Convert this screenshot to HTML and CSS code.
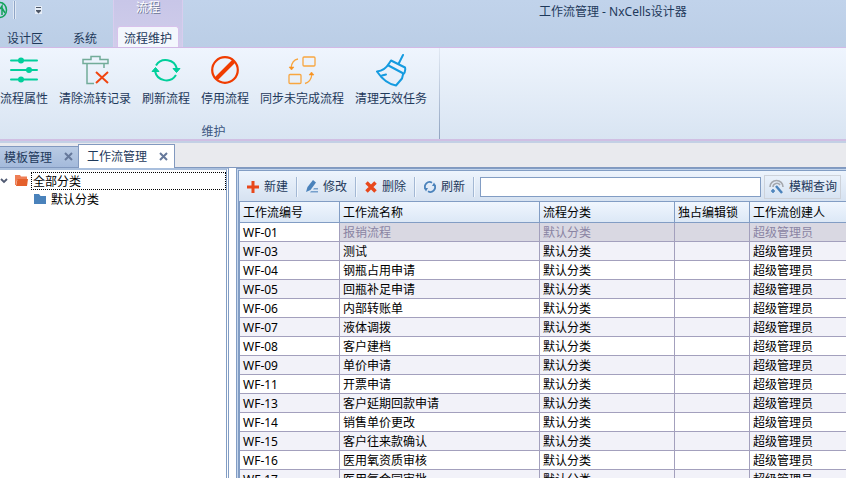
FILE: index.html
```html
<!DOCTYPE html>
<html lang="zh-CN">
<head>
    <meta charset="UTF-8">
    <meta name="viewport" content="width=device-width, initial-scale=1.0">
    <title>工作流管理 - NxCells设计器</title>
    <link rel="stylesheet" href="styles.css">
</head>
<body>
    <header class="titlebar">
        <div class="main-tabs">
            <div class="quick-bar">
                <svg class="logo" width="8" height="20" viewBox="0 0 8 20" fill="none" stroke="#12a35a" stroke-width="1.5">
                    <path d="M0 2.500a6.500 7.500 0 0 1 0 15"/>
                    <path d="M0 9l2-3v9M2 8l3 5"/>
                </svg>
                <span class="quick-sep"></span>
                <button class="quick-menu" aria-label="自定义快速访问工具栏">
                    <svg width="7" height="8" viewBox="0 0 7 8"><path d="M0 0h7v8H0z" fill="#e6edf7"/><path d="M1 1.500h5" stroke="#4c5666" stroke-width="1"/><path d="M1 4h5v1L3.500 7.500 1 5z" fill="#4c5666"/></svg>
                </button>
            </div>
            <nav class="tab-row">
                <button class="ribbon-tab">设计区</button>
                <button class="ribbon-tab">系统</button>
            </nav>
        </div>
        <div class="context-group">
            <div class="context-title">流程</div>
            <button class="ribbon-tab active">流程维护</button>
        </div>
        <h1 class="window-title">工作流管理 - NxCells设计器</h1>
    </header>

    <section class="ribbon">
        <div class="ribbon-group">
            <div class="ribbon-buttons">
                <button class="ribbon-btn">
                    <svg width="30" height="30" viewBox="0 0 30 30" stroke="#00cf9b" stroke-width="2" stroke-linecap="round" fill="#00cf9b">
                        <path d="M2 5.500h26M2 15h26M2 24.500h26"/>
                        <circle cx="12" cy="5.500" r="2"/><circle cx="20" cy="15" r="2"/><circle cx="12" cy="24.500" r="2"/>
                    </svg>
                    <span>流程属性</span>
                </button>
                <button class="ribbon-btn">
                    <svg width="30" height="30" viewBox="0 0 30 30" fill="none" stroke="#72ac99" stroke-width="1.5">
                        <path d="M3 4.500h8v-3h9v3h8v4H3zM7 8.500v20h7M24 8.500v4.500"/>
                        <path d="M16 17l12 11M28 17L16 28" stroke="#f04410" stroke-width="2"/>
                    </svg>
                    <span>清除流转记录</span>
                </button>
                <button class="ribbon-btn">
                    <svg width="30" height="30" viewBox="0 0 30 30" fill="none" stroke="#00cf9b" stroke-width="2">
                        <path d="M5 10.500A11.500 11.500 0 0 1 26 14M25 20A11.500 11.500 0 0 1 4 16"/>
                        <path d="M22 13.500h7l-3.500 4zM1 16.500h7l-3.500-4z" fill="#00cf9b" stroke-width="1"/>
                    </svg>
                    <span>刷新流程</span>
                </button>
                <button class="ribbon-btn">
                    <svg width="30" height="30" viewBox="0 0 30 30" fill="none" stroke="#f03c00">
                        <circle cx="15" cy="15" r="12.800" stroke-width="2.200"/>
                        <path d="M6 24L24 6" stroke-width="4"/>
                    </svg>
                    <span>停用流程</span>
                </button>
                <button class="ribbon-btn">
                    <svg width="30" height="30" viewBox="0 0 30 30" fill="none" stroke="#f8a640" stroke-width="1.300">
                        <rect x="16" y="2" width="12" height="9" rx="1"/>
                        <rect x="2" y="19.500" width="12" height="9" rx="1"/>
                        <path d="M11 4Q5 5 4 13M18 28.500Q24 27 25 19"/>
                        <path d="M2 12h5l-2.500 3zM22 20h5l-2.500-3z" fill="#f8931f" stroke="#f8931f" stroke-width=".5"/>
                    </svg>
                    <span>同步未完成流程</span>
                </button>
                <button class="ribbon-btn">
                    <svg width="32" height="34" viewBox="0 0 32 34" fill="none" stroke="#159be0" stroke-width="2" stroke-linejoin="round" stroke-linecap="round">
                        <path d="M28 2l-4 8M16 7.500l14 7q1 4-2 7l-1 4-6 7q-11-2-19-14 8-1 12-8z"/>
                        <path d="M13.500 12.500l14 7.500M7 22.500l4-1"/>
                    </svg>
                    <span>清理无效任务</span>
                </button>
            </div>
            <div class="group-caption">维护</div>
        </div>
    </section>

    <nav class="doc-tabs">
        <div class="doc-tab">
            <button class="doc-name">模板管理</button>
            <button class="doc-close" aria-label="关闭"><svg width="9" height="9" viewBox="0 0 9 9"><path d="M1 1l7 7M8 1L1 8" stroke="#66799b" stroke-width="2"/></svg></button>
        </div>
        <div class="doc-tab current">
            <button class="doc-name">工作流管理</button>
            <button class="doc-close" aria-label="关闭"><svg width="9" height="9" viewBox="0 0 9 9"><path d="M1 1l7 7M8 1L1 8" stroke="#66799b" stroke-width="2"/></svg></button>
        </div>
    </nav>

    <main class="workspace">
        <aside class="tree-pane">
            <div class="tree-row">
                <svg width="8" height="6" viewBox="0 0 8 6" fill="none" stroke="#505a72" stroke-width="1.800"><path d="M1 1l3 3 3-3"/></svg>
                <svg class="folder" width="13" height="12" viewBox="0 0 13 12"><path d="M0 0h5l1 1.500h6V5H2L1 10H0z" fill="#ee7f56"/><path d="M2.500 4H13l-1 7H1z" fill="#e4602c"/></svg>
                <span class="tree-label selected">全部分类</span>
            </div>
            <div class="tree-row child">
                <svg class="folder" width="12" height="11" viewBox="0 0 12 11"><path d="M0 0h5l1.500 2H12v8H0z" fill="#4a82bb"/></svg>
                <span class="tree-label">默认分类</span>
            </div>
        </aside>

        <section class="grid-pane">
            <div class="toolbar">
                <button class="tool-btn">
                    <svg width="12" height="12" viewBox="0 0 12 12"><path d="M6 0v12M0 6h12" stroke="#e8481c" stroke-width="3"/></svg>
                    <span>新建</span>
                </button>
                <button class="tool-btn">
                    <svg width="12" height="13" viewBox="0 0 12 13" fill="#4a82bb"><path d="M7 0l3 2.500-5.500 7.500L0 12l1.500-5z"/><path d="M5 11h7v1.500H4zM8 8h4v1.500H7z" opacity=".7"/></svg>
                    <span>修改</span>
                </button>
                <button class="tool-btn">
                    <svg width="12" height="12" viewBox="0 0 12 12"><path d="M1.500 1.500l9 9M10.500 1.500l-9 9" stroke="#e8481c" stroke-width="3.500"/></svg>
                    <span>删除</span>
                </button>
                <button class="tool-btn">
                    <svg width="12" height="12" viewBox="0 0 12 12" fill="none" stroke="#4a82bb" stroke-width="1.800"><path d="M1.500 8A4.700 4.700 0 0 1 8 1.700M10.500 4A4.700 4.700 0 0 1 4 10.300"/><path d="M0 7h4L2 10.500zM8 5h4l-2-3.500z" fill="#4a82bb" stroke="none"/></svg>
                    <span>刷新</span>
                </button>
                <input class="search-box" type="text" aria-label="查询内容">
                <button class="search-btn">
                    <svg width="16" height="16" viewBox="0 0 16 16" fill="none" stroke="#a4a7ad" stroke-width="1.600"><path d="M1 8A6.500 6.500 0 0 1 14 8M4 8a3.800 3.800 0 0 1 7-2"/><path d="M7 7l6 7" stroke="#4a82bb" stroke-width="2.500"/><path d="M4 10v4M2 12h4" stroke="#4a82bb"/></svg>
                    <span>模糊查询</span>
                </button>
            </div>
            <table class="flow-table">
                <colgroup>
                    <col class="col-code"><col class="col-name"><col class="col-type"><col class="col-lock"><col>
                </colgroup>
                <thead>
                    <tr><th>工作流编号</th><th>工作流名称</th><th>流程分类</th><th>独占编辑锁</th><th>工作流创建人</th></tr>
                </thead>
                <tbody>
                    <tr class="focused"><td>WF-01</td><td>报销流程</td><td>默认分类</td><td></td><td>超级管理员</td></tr>
                    <tr><td>WF-03</td><td>测试</td><td>默认分类</td><td></td><td>超级管理员</td></tr>
                    <tr><td>WF-04</td><td>钢瓶占用申请</td><td>默认分类</td><td></td><td>超级管理员</td></tr>
                    <tr><td>WF-05</td><td>回瓶补足申请</td><td>默认分类</td><td></td><td>超级管理员</td></tr>
                    <tr><td>WF-06</td><td>内部转账单</td><td>默认分类</td><td></td><td>超级管理员</td></tr>
                    <tr><td>WF-07</td><td>液体调拨</td><td>默认分类</td><td></td><td>超级管理员</td></tr>
                    <tr><td>WF-08</td><td>客户建档</td><td>默认分类</td><td></td><td>超级管理员</td></tr>
                    <tr><td>WF-09</td><td>单价申请</td><td>默认分类</td><td></td><td>超级管理员</td></tr>
                    <tr><td>WF-11</td><td>开票申请</td><td>默认分类</td><td></td><td>超级管理员</td></tr>
                    <tr><td>WF-13</td><td>客户延期回款申请</td><td>默认分类</td><td></td><td>超级管理员</td></tr>
                    <tr><td>WF-14</td><td>销售单价更改</td><td>默认分类</td><td></td><td>超级管理员</td></tr>
                    <tr><td>WF-15</td><td>客户往来款确认</td><td>默认分类</td><td></td><td>超级管理员</td></tr>
                    <tr><td>WF-16</td><td>医用氧资质审核</td><td>默认分类</td><td></td><td>超级管理员</td></tr>
                    <tr><td>WF-17</td><td>医用氧合同审批</td><td>默认分类</td><td></td><td>超级管理员</td></tr>
                </tbody>
            </table>
        </section>
    </main>
</body>
</html>
```

FILE: styles.css
```css
/* General Styles */
* {
    box-sizing: border-box;
}

body {
    margin: 0;
    height: 100vh;
    display: flex;
    flex-direction: column;
    overflow: hidden;
    background: #fff;
    color: #000;
    font-family: "Noto Sans", "Noto Sans CJK SC", sans-serif;
    font-size: 12px;
    line-height: 18px;
}

button {
    margin: 0;
    padding: 0;
    border: 0;
    background: none;
    color: #1e395b;
    font: inherit;
    white-space: nowrap;
}

svg {
    display: block;
    flex: none;
}

/* Title Bar */
.titlebar {
    display: flex;
    flex: none;
    height: 48px;
    background: linear-gradient(#c1d3eb, #bbcee6);
    border-bottom: 1px solid #d3b9e6;
}

.main-tabs {
    display: flex;
    flex-direction: column;
    width: 113px;
}

.quick-bar {
    display: flex;
    align-items: center;
    height: 20px;
}

.quick-sep {
    width: 3px;
    height: 18px;
    margin: 0 19px 0 5px;
    background: #8fa5c6;
    border: 1px solid #e0e9f5;
    border-width: 0 1px;
}

.tab-row {
    display: flex;
    gap: 30px;
    margin-top: 10px;
    padding-left: 7px;
}

/* Context Tab Group */
.context-group {
    display: flex;
    flex-direction: column;
    width: 70px;
    padding: 0 3px;
    background: linear-gradient(#c8c6e8, #d0cdea);
    border-left: 1px solid #d8cdee;
    border-right: 1px solid #d8cdee;
}

.context-title {
    height: 26px;
    line-height: 16px;
    text-align: center;
    color: #fff;
    text-shadow: 1px 1px 0 #6b7594;
}

.ribbon-tab.active {
    height: 21px;
    padding-top: 3px;
    background: #f3f7fd;
    border: 1px solid #d8c2ec;
    border-bottom: 0;
    border-radius: 3px 3px 0 0;
}

.window-title {
    flex: 1;
    margin: 0;
    padding: 3px 0 0 356px;
    color: #1e395b;
    font-size: 12px;
    font-weight: 400;
    white-space: nowrap;
}

/* Ribbon */
.ribbon {
    display: flex;
    flex: none;
    height: 95px;
    background: linear-gradient(#eff5fe, #e7eff9 35%, #d8e4f2);
    border-bottom: 2px solid #c3d0e5;
    box-shadow: inset 0 -2px #d0bfe3;
}

.ribbon-group {
    display: flex;
    flex-direction: column;
    gap: 15px;
    margin-bottom: 2px;
    padding: 5px 12px 0 0;
    border-right: 1px solid;
    border-image: linear-gradient(#e3eaf4, #8fa3c0) 1;
}

.ribbon-buttons {
    display: flex;
    gap: 11px;
}

.ribbon-btn {
    display: flex;
    flex-direction: column;
    align-items: center;
}

.ribbon-btn svg {
    height: 34px;
}

.ribbon-btn span {
    margin-top: 3px;
}

.group-caption {
    color: #3b5680;
    text-align: center;
}

/* Document Tabs */
.doc-tabs {
    display: flex;
    flex: none;
    align-items: flex-end;
    height: 25px;
    background: #e9eaee;
    box-shadow: inset 0 -1px #8299bf;
}

.doc-tab {
    display: flex;
    align-items: center;
    gap: 12px;
    height: 22px;
    padding: 1px 5px 0 4px;
    background: linear-gradient(#b9cbe4, #a4badb);
    border: 1px solid #8299bf;
    border-width: 1px 0;
}

.doc-tab.current {
    height: 24px;
    padding: 1px 6px 0 8px;
    background: #fff;
    border-width: 1px 1px 0;
}

.doc-close {
    padding-bottom: 2px;
}

/* Workspace */
.workspace {
    display: flex;
    flex: 1;
    gap: 7px;
    min-height: 0;
    background: #fff;
}

.tree-pane {
    width: 229px;
    padding-top: 2px;
    border-top: 2px solid #a9bfdd;
    border-right: 3px double #829dc4;
}

.tree-row {
    display: flex;
    align-items: center;
    height: 18px;
}

.tree-row.child {
    padding-left: 34px;
}

.tree-row .folder {
    margin-left: 7px;
}

.tree-row.child .folder {
    margin-left: 0;
}

.tree-label {
    margin-left: 5px;
    padding-top: 1px;
}

.tree-label.selected {
    flex: 1;
    margin-left: 3px;
    padding-left: 1px;
    line-height: 15px;
    border: 1px dotted #000;
}

.grid-pane {
    flex: 1;
    min-width: 0;
    overflow: hidden;
    background: #c5d6ed;
    border: 3px double #829dc4;
    border-right: 0;
    border-bottom: 0;
}

/* Toolbar */
.toolbar {
    display: flex;
    align-items: center;
    height: 30px;
    padding: 1px 5px 0 0;
    background: linear-gradient(#edf4fd, #d6e2f1);
}

.tool-btn {
    display: flex;
    align-items: center;
    gap: 5px;
    width: 58px;
    height: 20px;
    margin-right: 1px;
    padding: 0 7px 0 8px;
    border-right: 1px solid #a3b8d4;
    box-shadow: 1px 0 #f2f7fd;
}

.search-box {
    flex: 1;
    min-width: 0;
    height: 20px;
    margin: 0 3px 0 5px;
    padding: 0 3px;
    background: #fff;
    border: 1px solid #829dc4;
    font: inherit;
}

.search-btn {
    display: flex;
    align-items: center;
    gap: 4px;
    height: 24px;
    padding: 0 3px 0 4px;
    border: 1px solid #cdd2da;
}

/* Flow Table */
.flow-table {
    width: 100%;
    table-layout: fixed;
    border-spacing: 0;
    background: #fff;
    border-left: 1px solid #829dc4;
    border-top: 1px solid #829dc4;
}

.col-code {
    width: 100px;
}

.col-name {
    width: 200px;
}

.col-type {
    width: 135px;
}

.col-lock {
    width: 75px;
}

.flow-table th {
    height: 21px;
    padding: 1px 3px 0;
    background: linear-gradient(#f0f6fe, #dce8f6);
    border-right: 1px solid #829dc4;
    border-bottom: 1px solid #829dc4;
    font-weight: 400;
    text-align: left;
    white-space: nowrap;
}

.flow-table td {
    height: 19px;
    padding: 1px 3px 0;
    border-right: 1px solid #a3a0bd;
    border-bottom: 1px solid #a3a0bd;
    line-height: 17px;
    white-space: nowrap;
}

.flow-table th:last-child,
.flow-table td:last-child {
    border-right: 0;
}

.flow-table tbody tr:nth-child(even) {
    background: #f2f2f9;
}

.flow-table .focused td {
    background: #d9d8e2;
    color: #8a84a3;
}

.flow-table .focused td:first-child {
    background: #fff;
    color: #000;
}
```
